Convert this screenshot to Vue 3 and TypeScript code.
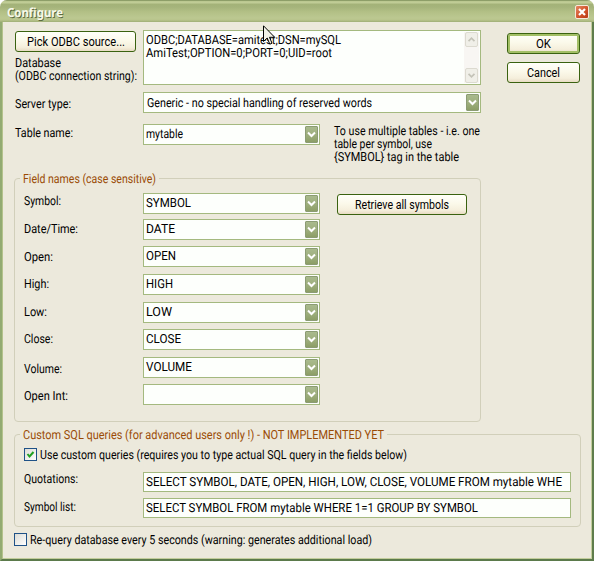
<script setup lang="ts">
import type { Directive } from 'vue'

interface Field {
  label: string
  labelWidth: number
  value: string
  valueWidth: number
}

const fields: Field[] = [
  { label: 'Symbol:', labelWidth: 37, value: 'SYMBOL', valueWidth: 45 },
  { label: 'Date/Time:', labelWidth: 54, value: 'DATE', valueWidth: 29 },
  { label: 'Open:', labelWidth: 29, value: 'OPEN', valueWidth: 30 },
  { label: 'High:', labelWidth: 25, value: 'HIGH', valueWidth: 27 },
  { label: 'Low:', labelWidth: 23, value: 'LOW', valueWidth: 26 },
  { label: 'Close:', labelWidth: 29, value: 'CLOSE', valueWidth: 35 },
  { label: 'Volume:', labelWidth: 38, value: 'VOLUME', valueWidth: 46 },
  { label: 'Open Int:', labelWidth: 44, value: '', valueWidth: 0 },
]

// Condenses the text so that it spans the given width in pixels.
const vFit: Directive<HTMLElement, number> = {
  mounted(el, { value }) {
    const natural = el.getBoundingClientRect().width
    if (!natural || !value) return
    el.style.setProperty('--condense', String(value / natural))
    el.style.marginRight = `${value - natural}px`
  },
}
</script>

<template>
  <main class="window">
    <header class="titlebar">
      <h1><span v-fit="56">Configure</span></h1>
      <button class="close" aria-label="Close">
        <svg viewBox="0 0 14 14" width="14" height="14"><path d="M4 4l6 6M10 4l-6 6" stroke="#fff" stroke-width="2.2" /></svg>
      </button>
    </header>

    <div class="client">
      <section class="top">
        <div class="captions">
          <button class="btn pick"><span v-fit="98">Pick ODBC source...</span></button>
          <p class="db"><span v-fit="46">Database</span><br /><span v-fit="122">(ODBC connection string):</span></p>
          <p class="server"><span v-fit="56">Server type:</span></p>
          <p class="table"><span v-fit="58">Table name:</span></p>
        </div>

        <div class="inputs">
          <div class="memo">
            <p><span v-fit="195">ODBC;DATABASE=amitest;DSN=mySQL</span><br /><span v-fit="186">AmiTest;OPTION=0;PORT=0;UID=root</span></p>
            <div class="scroll">
              <i><svg viewBox="0 0 13 13"><path d="M3 8.5L6.5 5 10 8.5" /></svg></i>
              <i><svg viewBox="0 0 13 13"><path d="M3 4.5L6.5 8 10 4.5" /></svg></i>
            </div>
          </div>
          <div class="combo server-combo">
            <span v-fit="225">Generic - no special handling of reserved words</span>
            <i class="arrow"><svg viewBox="0 0 13 17"><path d="M3 6.5l3.5 3.5L10 6.5" /></svg></i>
          </div>
          <div class="table-row">
            <div class="combo">
              <span v-fit="37">mytable</span>
              <i class="arrow"><svg viewBox="0 0 13 17"><path d="M3 6.5l3.5 3.5L10 6.5" /></svg></i>
            </div>
            <p class="hint"><span v-fit="146">To use multiple tables - i.e. one</span><br /><span v-fit="98">table per symbol, use</span><br /><span v-fit="125">{SYMBOL} tag in the table</span></p>
          </div>
        </div>

        <div class="actions">
          <button class="btn default"><span v-fit="15">OK</span></button>
          <button class="btn"><span v-fit="33">Cancel</span></button>
        </div>
      </section>

      <section class="group names">
        <h2><span v-fit="133">Field names (case sensitive)</span></h2>
        <div class="labels">
          <p v-for="f in fields" :key="f.label"><span v-fit="f.labelWidth">{{ f.label }}</span></p>
        </div>
        <div class="combos">
          <div v-for="f in fields" :key="f.label" class="combo">
            <span v-fit="f.valueWidth">{{ f.value }}</span>
            <i class="arrow"><svg viewBox="0 0 13 17"><path d="M3 6.5l3.5 3.5L10 6.5" /></svg></i>
          </div>
        </div>
        <button class="btn retrieve"><span v-fit="94">Retrieve all symbols</span></button>
      </section>

      <section class="group custom">
        <h2><span v-fit="361">Custom SQL queries (for advanced users only !) - NOT IMPLEMENTED YET</span></h2>
        <label class="check">
          <i class="box"><svg viewBox="0 0 13 13"><path d="M3.5 6l2 2.5L9.5 4" /></svg></i>
          <span v-fit="367">Use custom queries (requires you to type actual SQL query in the fields below)</span>
        </label>
        <div class="query">
          <p><span v-fit="54">Quotations:</span></p>
          <div class="edit"><span v-fit="416">SELECT SYMBOL, DATE, OPEN, HIGH, LOW, CLOSE, VOLUME FROM mytable WHE</span></div>
        </div>
        <div class="query">
          <p><span v-fit="52">Symbol list:</span></p>
          <div class="edit"><span v-fit="332">SELECT SYMBOL FROM mytable WHERE 1=1 GROUP BY SYMBOL</span></div>
        </div>
      </section>

      <label class="check requery">
        <i class="box"></i>
        <span v-fit="342">Re-query database every 5 seconds (warning: generates additional load)</span>
      </label>
    </div>

    <svg class="cursor" viewBox="0 0 13 21" width="13" height="21">
      <path d="M.5 .8V16.5L4.2 13l2.6 6.2 2.2-1L6.5 12.3h5.2z" fill="#f3f3e8" stroke="#000" />
    </svg>
  </main>
</template>

<style>
body { background: #fff; overflow: hidden; }
</style>

<style scoped>
* { box-sizing: border-box; margin: 0; padding: 0; }
.window {
  position: relative;
  width: 594px;
  height: 561px;
  display: flex;
  flex-direction: column;
  overflow: hidden;
  border-radius: 7px 7px 0 0;
  font: 12.5px/13px Roboto, sans-serif;
  text-rendering: geometricPrecision;
  color: #000;
  background: #ece9dc;
}
span {
  display: inline-block;
  vertical-align: top;
  flex: none;
  white-space: nowrap;
  transform: translateY(1px) scaleX(var(--condense, 1));
  transform-origin: 0 0;
}
h1 span, .btn span { transform: scaleX(var(--condense, 1)); }
i { font-style: normal; }
.titlebar {
  height: 22px;
  flex: none;
  display: flex;
  justify-content: space-between;
  padding: 5px 5px 0 7px;
  background: linear-gradient(#8d9e68 0, #8d9e68 1px, #b9c68e 1px, #c2ce98 3px, #a3b278 4px, #a5b47b 7px, #b3c086 12px, #bcc891 18px, #b8c48c 20px, #9fae75 22px);
}
h1 {
  font: 700 12.5px/15px "Noto Sans", sans-serif;
  color: #f7f9ea;
  text-shadow: 1px 1px 0 #5c6b3e;
}
.close {
  width: 14px;
  height: 14px;
  border: 1px solid #f6e9dc;
  border-radius: 2px;
  background: linear-gradient(135deg, #e48862, #d04f26 60%, #b83c18);
  display: flex;
  align-items: center;
  justify-content: center;
}
.close svg { flex: none; }
.client {
  flex: 1;
  border: solid;
  border-width: 0 2px 2px;
  border-color: #71875a #5f7d4c #5b7a4b #93ab72;
  box-shadow: inset 1px 0 #b4c28c, inset -1px 0 #c3cd9c, inset 0 -1px #c3cd9c;
  padding-left: 12px;
}
.top { display: flex; height: 156px; padding-left: 1px; }
.captions { width: 128px; padding-top: 9px; }
.db { padding-top: 4px; }
.server { padding-top: 15px; }
.table { padding-top: 16px; }
.btn {
  display: flex;
  align-items: center;
  justify-content: center;
  width: 73px;
  height: 21px;
  border: 1px solid #3a6210;
  border-radius: 3px;
  background: linear-gradient(#fffffa, #fbf9ea 45%, #f5efdc 80%, #e8dcc4);
  font: inherit;
  color: #000;
}
.btn.default { box-shadow: inset 0 0 0 2px #a3bf66; }
.pick { width: 121px; }
.inputs { width: 338px; padding-top: 8px; }
.memo {
  height: 55px;
  display: flex;
  justify-content: space-between;
  border: 1px solid #a4b97f;
  background: #fdfffc;
  padding: 2px 1px 1px 2px;
}
.scroll {
  width: 15px;
  display: flex;
  flex-direction: column;
  justify-content: space-between;
  align-items: center;
  background: #f8f6f3;
  margin-top: -1px;
}
.scroll i {
  width: 13px;
  height: 15px;
  border: 1px solid #dcdad0;
  border-radius: 2px;
  background: #f0efe8;
  display: flex;
  align-items: center;
}
.scroll path { fill: none; stroke: #c4c3b8; stroke-width: 2; }
.combo {
  height: 21px;
  display: flex;
  justify-content: space-between;
  border: 1px solid #a4b97f;
  background: #fdfffc;
  padding: 1px 1px 1px 2px;
}
.combo span { padding-top: 1px; }
.arrow {
  width: 13px;
  height: 17px;
  border: 1px solid #8c9c74;
  border-radius: 1px;
  background: linear-gradient(#a9ba8d, #9dae7c 55%, #8c9e66);
  display: flex;
}
.arrow svg { width: 13px; height: 17px; margin: -1px; flex: none; }
.arrow path { fill: none; stroke: #fff; stroke-width: 2; }
.server-combo { margin-top: 7px; padding-left: 3px; }
.server-combo span { padding-top: 2px; }
.table-row { display: flex; margin-top: 11px; }
.table-row .combo { width: 177px; }
.hint { padding: 0 0 0 14px; }
.actions { padding: 11px 0 0 26px; display: flex; flex-direction: column; gap: 8px; }
.group {
  position: relative;
  border: 1px solid #d1cfba;
  border-radius: 4px;
}
h2 {
  position: absolute;
  left: 5px;
  top: -7px;
  padding: 0 3px;
  font: inherit;
  color: #9a4b05;
  background: #ece9dc;
  display: flex;
}
.names { width: 467px; height: 244px; display: flex; align-items: flex-start; }
.labels {
  width: 128px;
  padding: 15px 0 0 9px;
  display: grid;
  grid-template-rows: 28px 28px 27px 28px 27px 30px 27px 13px;
}
.combos {
  width: 177px;
  padding-top: 14px;
  display: grid;
  grid-template-rows: 26px 27px 28px 28px 27px 28px 27px 21px;
}
.retrieve { width: 130px; margin: 15px 0 0 17px; }
.custom { width: 567px; height: 93px; margin-top: 12px; padding: 13px 9px 0; }
.check { display: flex; gap: 3px; height: 13px; }
.box {
  width: 13px;
  height: 13px;
  flex: none;
  border: 1px solid #1f5287;
  background: linear-gradient(135deg, #dcdcd5, #fff);
}
.box svg { display: block; width: 13px; height: 13px; margin: -1px; }
.box path { fill: none; stroke: #21a121; stroke-width: 2; }
.query { display: flex; margin-top: 6px; }
.check + .query { margin-top: 11px; }
.query p { width: 119px; }
.query + .query p { padding-top: 2px; }
.check + .query p { padding-top: 0; }
.edit {
  width: 428px;
  height: 20px;
  border: 1px solid #a4b97f;
  background: #fdfffc;
  padding: 2px;
}
.requery { margin-top: 6px; }
.cursor { position: absolute; left: 263px; top: 25px; }
</style>
